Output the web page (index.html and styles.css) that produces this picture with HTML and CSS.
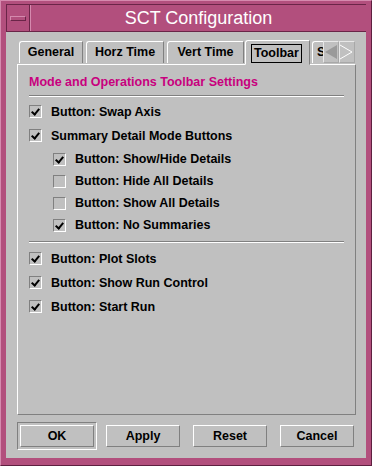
FILE: index.html
```html
<!DOCTYPE html>
<html lang="en">
<head>
    <meta charset="UTF-8">
    <title>SCT Configuration</title>
    <link rel="stylesheet" href="styles.css">
</head>
<body>
    <div class="window">
        <div class="titlebar">
            <div class="menu-btn"><span class="menu-bar"></span></div>
            <div class="title">SCT Configuration</div>
        </div>

        <div class="content">
            <div class="tabs">
                <div class="tab tab-general">General</div>
                <div class="tab tab-horz">Horz Time</div>
                <div class="tab tab-vert">Vert Time</div>
                <div class="tab tab-active"><span class="focus">Toolbar</span></div>
                <div class="tab tab-cut">S</div>
                <div class="arrow">
                    <svg width="15" height="22" viewBox="0 0 15 22"><polygon points="2,11 14,4 14,18" fill="#9a9a9a"/></svg>
                </div>
                <div class="arrow">
                    <svg width="15" height="22" viewBox="0 0 15 22"><polyline points="1,4 13,11 1,18" fill="none" stroke="#ffffff" stroke-width="1"/></svg>
                </div>
            </div>

            <div class="panel">
                <div class="heading">Mode and Operations Toolbar Settings</div>
                <div class="sep"></div>

                <div class="row"><span class="cb on"></span>Button: Swap Axis</div>
                <div class="row"><span class="cb on"></span>Summary Detail Mode Buttons</div>
                <div class="row sub"><span class="cb on"></span>Button: Show/Hide Details</div>
                <div class="row sub"><span class="cb"></span>Button: Hide All Details</div>
                <div class="row sub"><span class="cb"></span>Button: Show All Details</div>
                <div class="row sub"><span class="cb on"></span>Button: No Summaries</div>

                <div class="sep sep-mid"></div>

                <div class="row"><span class="cb on"></span>Button: Plot Slots</div>
                <div class="row"><span class="cb on"></span>Button: Show Run Control</div>
                <div class="row"><span class="cb on"></span>Button: Start Run</div>
            </div>

            <div class="buttons">
                <div class="default-ring"><button class="btn">OK</button></div>
                <button class="btn">Apply</button>
                <button class="btn">Reset</button>
                <button class="btn">Cancel</button>
            </div>
        </div>
    </div>
</body>
</html>
```

FILE: styles.css
```css
body {
    margin: 0;
    padding: 0;
    background: #b24f7d;
    font-family: "Liberation Sans", Arial, sans-serif;
}

.window {
    width: 372px;
    height: 466px;
    box-sizing: border-box;
    background: #b24f7d;
    border-left: 1px solid #d58aae;
    border-top: 1px solid #d58aae;
    border-right: 1px solid #5e2040;
    border-bottom: 1px solid #5e2040;
    padding: 3px 5px 7px 5px;
    display: flex;
    flex-direction: column;
}

.titlebar {
    height: 27px;
    display: flex;
    border-top: 1px solid #6a2548;
    border-left: 1px solid #6a2548;
    box-sizing: border-box;
}

.menu-btn {
    width: 22px;
    border-right: 1px solid #6a2548;
    display: flex;
    align-items: center;
    justify-content: center;
}

.menu-bar {
    width: 14px;
    height: 3px;
    background: #b24f7d;
    border-top: 1px solid #d58aae;
    border-left: 1px solid #d58aae;
    border-bottom: 1px solid #6a2548;
    border-right: 1px solid #6a2548;
}

.title {
    flex: 1;
    text-align: center;
    color: #ffffff;
    font-size: 18px;
    line-height: 26px;
    border-left: 1px solid #d58aae;
}

.content {
    flex: 1;
    background: #c0c0c0;
    border-top: 1px solid #6a2548;
    padding: 9px 10px 0 11px;
    display: flex;
    flex-direction: column;
}

.tabs {
    display: flex;
    align-items: flex-end;
    height: 23px;
    position: relative;
    z-index: 1;
}

.tab {
    flex-shrink: 0;
    height: 22px;
    box-sizing: border-box;
    border-top: 1px solid #ffffff;
    border-left: 1px solid #ffffff;
    border-right: 1px solid #808080;
    border-top-left-radius: 3px;
    padding: 0;
    margin-right: 3px;
    font-size: 12.5px;
    font-weight: bold;
    line-height: 21px;
    color: #000000;
    margin-bottom: 1px;
    white-space: nowrap;
    text-align: center;
}

.tab-general {
    margin-left: 2px;
    width: 64px;
}

.tab-horz {
    width: 78px;
}

.tab-vert {
    width: 77px;
    margin-right: 1px;
}

.tab-active {
    width: 65px;
    height: 25px;
    margin-bottom: -1px;
    padding: 2px 0 0 5px;
    margin-right: 2px;
    border-bottom: 1px solid #c0c0c0;
    background: #c0c0c0;
    text-align: left;
}

.focus {
    display: inline-block;
    border: 1px solid #000000;
    line-height: 17px;
    padding: 0 2px;
}

.tab-cut {
    padding: 0 0 0 4px;
    width: 11px;
    overflow: hidden;
    border-right: none;
    margin-right: 0;
    text-align: left;
}

.arrow {
    flex-shrink: 0;
    width: 16px;
    height: 22px;
    box-sizing: border-box;
    border: 1px solid #a8a8a8;
    border-top-color: #e8e8e8;
    border-left-color: #e8e8e8;
    margin-bottom: 1px;
}

.arrow svg {
    display: block;
    margin: -1px 0 0 -1px;
}

.panel {
    height: 351px;
    box-sizing: border-box;
    border-left: 1px solid #ffffff;
    border-top: 1px solid #ffffff;
    border-right: 1px solid #808080;
    border-bottom: 1px solid #808080;
    padding: 9px 11px 0 11px;
}

.heading {
    color: #c8007e;
    font-size: 12.5px;
    font-weight: bold;
    line-height: 17px;
}

.sep {
    height: 1px;
    background: #808080;
    border-bottom: 1px solid #ffffff;
    margin: 4px 0 3px 0;
}

.sep-mid {
    margin: 5px 0 4px 0;
}

.row {
    display: flex;
    align-items: center;
    height: 23px;
    margin-bottom: 1px;
    font-size: 12.5px;
    font-weight: bold;
    color: #000000;
}

.row.sub {
    margin-left: 24px;
    height: 22px;
    margin-bottom: 0;
}

.cb {
    width: 13px;
    height: 13px;
    box-sizing: border-box;
    border-top: 1px solid #808080;
    border-left: 1px solid #808080;
    border-bottom: 1px solid #ffffff;
    border-right: 1px solid #ffffff;
    margin-right: 9px;
    position: relative;
}

.cb.on::after {
    content: "";
    position: absolute;
    left: 3px;
    top: 1px;
    width: 3px;
    height: 6px;
    border-right: 2px solid #000000;
    border-bottom: 2px solid #000000;
    transform: rotate(40deg);
}

.buttons {
    display: flex;
    align-items: center;
    gap: 13px;
    margin-top: 7px;
}

.default-ring {
    padding: 2px;
    border-left: 1px solid #808080;
    border-top: 1px solid #808080;
    border-right: 1px solid #ffffff;
    border-bottom: 1px solid #ffffff;
    margin-right: -4px;
}

.btn {
    width: 74px;
    height: 22px;
    background: #c0c0c0;
    border-top: 1px solid #ffffff;
    border-left: 1px solid #ffffff;
    border-right: 1px solid #808080;
    border-bottom: 1px solid #808080;
    font-family: "Liberation Sans", Arial, sans-serif;
    font-size: 12.5px;
    font-weight: bold;
    color: #000000;
    padding: 0;
}
```
